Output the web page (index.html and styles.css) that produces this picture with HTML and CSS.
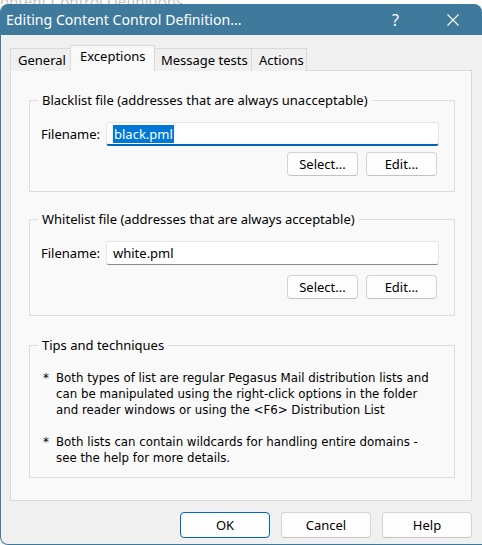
FILE: index.html
```html
<!DOCTYPE html>
<html lang="en">
<head>
    <meta charset="UTF-8">
    <title>Editing Content Control Definition...</title>
    <link rel="stylesheet" href="styles.css">
</head>
<body>

<div class="backdrop">ontent Control Definitions</div>

<div class="dialog">
    <div class="titlebar">
        <span class="title">Editing Content Control Definition...</span>
        <span class="help-glyph">?</span>
        <svg class="close" width="12" height="12" viewBox="0 0 12 12">
            <path d="M0.5 0.5 L11.5 11.5 M11.5 0.5 L0.5 11.5" stroke="#fff" stroke-width="1.1" fill="none"/>
        </svg>
    </div>

    <div class="content">
        <div class="tabs">
            <div class="tab tab-general">General</div>
            <div class="tab tab-active">Exceptions</div>
            <div class="tab tab-tests">Message tests</div>
            <div class="tab tab-actions">Actions</div>
        </div>

        <div class="panel">
            <fieldset class="group group-black">
                <legend>Blacklist file (addresses that are always unacceptable)</legend>
                <div class="group-body">
                    <div class="field-row">
                        <span class="label">Filename:</span>
                        <div class="textbox focused"><span class="selected">black.pml</span></div>
                    </div>
                    <div class="button-row">
                        <button class="btn btn-small">Select...</button>
                        <button class="btn btn-small">Edit...</button>
                    </div>
                </div>
            </fieldset>

            <fieldset class="group group-white">
                <legend>Whitelist file (addresses that are always acceptable)</legend>
                <div class="group-body">
                    <div class="field-row">
                        <span class="label">Filename:</span>
                        <div class="textbox">white.pml</div>
                    </div>
                    <div class="button-row">
                        <button class="btn btn-small">Select...</button>
                        <button class="btn btn-small">Edit...</button>
                    </div>
                </div>
            </fieldset>

            <fieldset class="group group-tips">
                <legend>Tips and techniques</legend>
                <div class="group-body">
                    <div class="tip">
                        <span class="star">*</span>
                        <span>Both types of list are regular Pegasus Mail distribution lists and<br>
                        can be manipulated using the right-click options in the folder<br>
                        and reader windows or using the &lt;F6&gt; Distribution List</span>
                    </div>
                    <div class="tip tip-last">
                        <span class="star">*</span>
                        <span>Both lists can contain wildcards for handling entire domains -<br>
                        see the help for more details.</span>
                    </div>
                </div>
            </fieldset>
        </div>

        <div class="actions">
            <button class="btn btn-main btn-default">OK</button>
            <button class="btn btn-main">Cancel</button>
            <button class="btn btn-main">Help</button>
        </div>
    </div>
</div>

</body>
</html>
```

FILE: styles.css
```css
* {
    box-sizing: border-box;
}
body {
    margin: 0;
    width: 482px;
    height: 545px;
    overflow: hidden;
    background: #fff;
    font-family: "Noto Sans", "Open Sans", sans-serif;
    font-size: 13px;
    color: #000;
}
.backdrop {
    height: 4px;
    overflow: hidden;
    color: #c4c4c4;
    font-size: 15px;
    line-height: 2px;
    white-space: nowrap;
}
.dialog {
    width: 482px;
    height: 541px;
    background: #f0f0f0;
    border-left: 1px solid #3f7a9d;
    border-bottom: 1px solid #3f7a9d;
    border-radius: 8px 8px 0 8px;
    overflow: hidden;
    display: flex;
    flex-direction: column;
}
.titlebar {
    height: 31px;
    background: #3f7a9d;
    color: #fff;
    display: flex;
    align-items: center;
    padding-left: 5px;
}
.title {
    font-size: 14.1px;
    flex: 1;
    white-space: nowrap;
}
.help-glyph {
    font-size: 16px;
    width: 12px;
    margin-right: 43px;
}
.close {
    margin-right: 23px;
}
.content {
    flex: 1;
    padding: 10px 10px 0 9px;
    display: flex;
    flex-direction: column;
}
.tabs {
    display: flex;
    align-items: flex-end;
    height: 26px;
    margin-bottom: -1px;
    position: relative;
    z-index: 1;
}
.tab {
    height: 23px;
    border: 1px solid #d9d9d9;
    border-bottom: 0;
    background: #f0f0f0;
    padding: 2px 7px 0;
    white-space: nowrap;
    margin-left: -1px;
    line-height: 18px;
}
.tab:first-child {
    margin-left: 0;
}
.tab-active {
    height: 26px;
    background: #f9f9f9;
    padding-top: 1px;
    margin: 0 -1px;
    position: relative;
    z-index: 2;
}
.tab-general { width: 61px; }
.tab-active { width: 85px; padding-left: 9px; }
.tab-tests { width: 99px; }
.tab-actions { width: 56px; }

.panel {
    height: 431px;
    background: #f9f9f9;
    border: 1px solid #d9d9d9;
    padding: 0 16px 0 18px;
}
.group {
    margin: 0;
    padding: 0;
    border: 1px solid #dcdcdc;
    min-width: 0;
}
.group legend {
    margin-left: 8px;
    padding: 0 4px;
    line-height: 18px;
    white-space: nowrap;
}
.group-body {
    padding: 0 15px 0 11px;
}
.group-black {
    margin-top: 20px;
}
.group-black .group-body {
    padding-top: 13px;
    padding-bottom: 15px;
}
.group-white {
    margin-top: 18px;
}
.group-white .group-body {
    padding-top: 13px;
    padding-bottom: 16px;
}
.group-white .button-row {
    margin-top: 10px;
}
.group-tips {
    margin-top: 20px;
}
.group-tips .group-body {
    padding: 16px 10px 11px 13px;
}
.field-row {
    display: flex;
    align-items: center;
}
.label {
    width: 65px;
    flex-shrink: 0;
}
.textbox {
    flex: 1;
    height: 24px;
    background: #fff;
    border: 1px solid #e6e6e6;
    border-bottom: 1px solid #8d8d8d;
    border-radius: 3px;
    padding: 2px 6px 0;
    line-height: 18px;
}
.textbox.focused {
    border-bottom: 2px solid #0067c0;
}
.selected {
    background: #0078d7;
    color: #fff;
    display: inline-block;
    padding: 0 1px;
}
.button-row {
    display: flex;
    justify-content: flex-end;
    gap: 8px;
    margin-top: 6px;
    padding-right: 2px;
}
.btn {
    font-family: inherit;
    font-size: 13px;
    color: #000;
    background: #fdfdfd;
    border: 1px solid #d3d3d3;
    border-bottom-color: #c2c2c2;
    border-radius: 4px;
    padding: 0;
}
.btn-small {
    width: 71px;
    height: 24px;
}
.tip {
    display: flex;
    gap: 6px;
    font-family: "DejaVu Sans", Tahoma, sans-serif;
    font-size: 11.8px;
    line-height: 16px;
    white-space: nowrap;
    margin-bottom: 16px;
}
.tip-last {
    margin-bottom: 0;
}
.star {
    width: 7px;
}
.actions {
    display: flex;
    justify-content: flex-end;
    gap: 11px;
    margin-top: 11px;
}
.btn-main {
    width: 90px;
    height: 26px;
}
.btn-default {
    border: 1px solid #0067c0;
}
```
